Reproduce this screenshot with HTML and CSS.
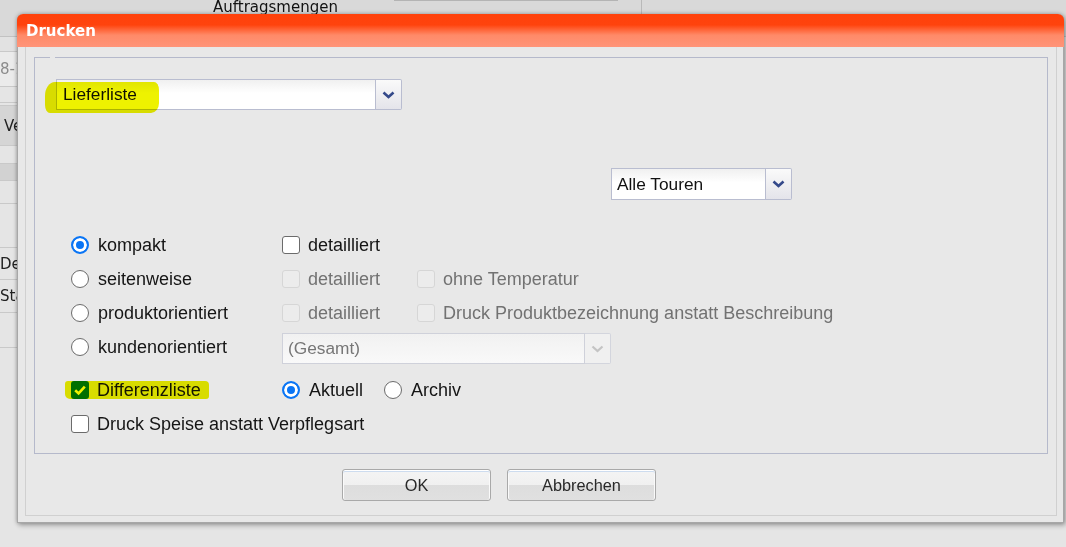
FILE: index.html
```html
<!DOCTYPE html>
<html lang="de">
<head>
  <meta charset="UTF-8" />
  <title>Drucken</title>
  <link rel="stylesheet" href="styles.css">
</head>
<body>
  <div class="topbar">
    <span class="caption">Auftragsmengen</span>
    <span class="topfield"></span>
    <span class="topsep"></span>
  </div>

  <div class="side">
    <div class="side-row r1"></div>
    <div class="side-row r2 dim">8-14</div>
    <div class="side-row r3"></div>
    <div class="side-row r4"></div>
    <div class="side-row r5 btnlike">Ver</div>
    <div class="side-row r6"></div>
    <div class="side-row r7 band"></div>
    <div class="side-row r8"></div>
    <div class="side-row r9"></div>
    <div class="side-row r10">Der</div>
    <div class="side-row r11">Stat</div>
    <div class="side-row r12"></div>
  </div>

  <div class="dialog">
    <div class="dialog-title">Drucken</div>
    <div class="dialog-panel">
      <fieldset class="print-box">
        <legend></legend>

        <div class="list-row">
          <div class="select list-select">
            <span class="select-value">Lieferliste</span>
            <span class="select-btn">
              <svg width="13" height="8" viewBox="0 0 13 8"><path d="M1.5 1.5 L6.5 6 L11.5 1.5" fill="none" stroke="#34498a" stroke-width="2.6"/></svg>
            </span>
          </div>
          <span class="marker marker-list"></span>
        </div>

        <div class="tour-row">
          <div class="select tour-select">
            <span class="select-value">Alle Touren</span>
            <span class="select-btn">
              <svg width="13" height="8" viewBox="0 0 13 8"><path d="M1.5 1.5 L6.5 6 L11.5 1.5" fill="none" stroke="#34498a" stroke-width="2.6"/></svg>
            </span>
          </div>
        </div>

        <div class="options">
          <label class="opt"><span class="radio on"></span>kompakt</label>
          <label class="opt"><span class="box"></span>detailliert</label>
          <span></span>

          <label class="opt"><span class="radio"></span>seitenweise</label>
          <label class="opt off"><span class="box"></span>detailliert</label>
          <label class="opt off"><span class="box"></span>ohne Temperatur</label>

          <label class="opt"><span class="radio"></span>produktorientiert</label>
          <label class="opt off"><span class="box"></span>detailliert</label>
          <label class="opt off"><span class="box"></span>Druck Produktbezeichnung anstatt Beschreibung</label>

          <label class="opt"><span class="radio"></span>kundenorientiert</label>
          <div class="select group-select off">
            <span class="select-value">(Gesamt)</span>
            <span class="select-btn">
              <svg width="13" height="8" viewBox="0 0 13 8"><path d="M1.5 1.5 L6.5 6 L11.5 1.5" fill="none" stroke="#c4c4c4" stroke-width="2.2"/></svg>
            </span>
          </div>
        </div>

        <div class="options extra">
          <label class="opt">
            <span class="box checked">
              <svg width="18" height="18" viewBox="0 0 18 18"><path d="M4.2 9.2 L7.6 12.4 L13.8 5.6" fill="none" stroke="#fff" stroke-width="2.6"/></svg>
            </span>
            Differenzliste
            <span class="marker marker-diff"></span>
          </label>
          <div class="archive">
            <label class="opt"><span class="radio on"></span>Aktuell</label>
            <label class="opt"><span class="radio"></span>Archiv</label>
          </div>

          <label class="opt wide"><span class="box"></span>Druck Speise anstatt Verpflegsart</label>
        </div>
      </fieldset>

      <div class="dialog-buttons">
        <button class="dlg-btn">OK</button>
        <button class="dlg-btn">Abbrechen</button>
      </div>
    </div>
  </div>
</body>
</html>
```

FILE: styles.css
```css
body {
  margin: 0;
  width: 1066px;
  height: 547px;
  overflow: hidden;
  position: relative;
  background: #e5e5e5;
  font-family: "Liberation Sans", Arial, sans-serif;
  color: #151515;
}

/* page behind the dialog */
.topbar {
  height: 37px;
  background: #d9d9d9;
  border-bottom: 1px solid #c2c2c2;
  box-sizing: border-box;
  display: flex;
  align-items: flex-start;
  overflow: hidden;
}

.caption {
  flex: 0 0 181px;
  margin-left: 213px;
  font-family: "DejaVu Sans", sans-serif;
  font-size: 15px;
  line-height: 14px;
  color: #111;
}

.topfield {
  flex: 0 0 224px;
  height: 1px;
  box-sizing: border-box;
  border: 1px solid #b4b4b4;
  border-top: none;
}

.topsep {
  width: 1px;
  height: 14px;
  margin-left: 23px;
  background: #b9b9b9;
}

.side {
  width: 60px;
  font-family: "DejaVu Sans", sans-serif;
  font-size: 15px;
  color: #222;
}

.side-row {
  box-sizing: border-box;
  border-bottom: 1px solid #c9c9c9;
  display: flex;
  align-items: center;
  white-space: nowrap;
  overflow: hidden;
}

.side-row.dim { color: #8c8c8c; }
.side-row.btnlike { background: #d5d5d5; padding-left: 4px; }
.side-row.band { background: #d2d2d2; }

.r1 { height: 15px; background: #e2e2e2; }
.r2 { height: 35px; background: #ebebeb; }
.r3 { height: 16px; }
.r4 { height: 3px; }
.r5 { height: 40px; }
.r6 { height: 18px; }
.r7 { height: 17px; }
.r8 { height: 23px; }
.r9 { height: 44px; }
.r10 { height: 32px; }
.r11 { height: 33px; }
.r12 { height: 35px; }

/* dialog */
.dialog {
  position: absolute;
  left: 17px;
  top: 14px;
  width: 1047px;
  height: 509px;
  box-sizing: border-box;
  background: #e8e8e8;
  border: 1px solid #a7a7a7;
  border-top: none;
  border-radius: 6px 6px 0 0;
  box-shadow: 0 0 4px rgba(0, 0, 0, 0.35), 2px 3px 5px rgba(0, 0, 0, 0.2);
  display: flex;
  flex-direction: column;
}

.dialog-title {
  height: 33px;
  margin: 0 -1px;
  padding: 2px 0 0 9px;
  box-sizing: border-box;
  border-radius: 6px 6px 0 0;
  background: linear-gradient(to bottom, #ff410b 0, #ff430d 33%, #ff8a68 64%, #ff9479 100%);
  color: #fff;
  font-family: "DejaVu Sans", sans-serif;
  font-weight: bold;
  font-size: 15px;
  line-height: 31px;
}

.dialog-panel {
  flex: 1;
  margin: 0 6px 6px 7px;
  border: 1px solid #d0d0d0;
  border-top: none;
  display: flex;
  flex-direction: column;
}

.print-box {
  margin: 10px 8px 0 8px;
  padding: 0;
  height: 397px;
  box-sizing: border-box;
  border: 1px solid #b5b9cb;
  min-inline-size: 0;
}

.print-box legend {
  margin-left: 15px;
  padding: 0;
  width: 5px;
  height: 0;
}

.list-row {
  position: relative;
  padding: 21px 0 0 21px;
}

.tour-row {
  padding: 58px 0 0 576px;
}

/* combo boxes */
.select {
  display: flex;
  font-size: 17.3px;
}

.select-value {
  flex: 1;
  box-sizing: border-box;
  border: 1px solid #b9bdd0;
  background: linear-gradient(to bottom, #f0f0f0 0, #ffffff 45%);
  padding-left: 5px;
  display: flex;
  align-items: center;
  color: #111;
}

.select-btn {
  flex: 0 0 26px;
  box-sizing: border-box;
  border: 1px solid #b9bdd0;
  border-left: none;
  border-radius: 0 2px 2px 0;
  background: linear-gradient(to bottom, #fafafa, #e4e4ea);
  display: flex;
  align-items: center;
  justify-content: center;
}

.list-select { width: 346px; height: 31px; }
.list-select .select-value { padding-left: 6px; }
.tour-select { width: 181px; height: 32px; }
.group-select { width: 329px; height: 31px; grid-column: 2 / 4; align-self: end; }

.select.off .select-value {
  border-color: #cfd1da;
  background: linear-gradient(to bottom, #f1f1f1, #f9f9f9);
  color: #767676;
}

.select.off .select-btn {
  border-color: #d3d5dd;
  background: #f0f0f0;
}

/* options grid */
.options {
  margin-top: 28px;
  padding-left: 36px;
  display: grid;
  grid-template-columns: 211px 135px 1fr;
  grid-auto-rows: 34px;
}

.options.extra {
  margin-top: 9px;
}

.opt {
  position: relative;
  display: flex;
  align-items: center;
  gap: 8px;
  font-size: 18px;
  color: #151515;
  white-space: nowrap;
}

.opt.off { color: #727272; }
.opt.wide { grid-column: 1 / 4; }

.archive {
  grid-column: 2 / 4;
  display: flex;
  gap: 21px;
}

.radio {
  width: 18px;
  height: 18px;
  margin-right: 1px;
  box-sizing: border-box;
  border: 1.4px solid #6b6b6b;
  border-radius: 50%;
  background: #fff;
}

.radio.on {
  border: 2px solid #0a75f5;
  background: #0a75f5;
  box-shadow: inset 0 0 0 3px #fff;
}

.box {
  width: 18px;
  height: 18px;
  box-sizing: border-box;
  border: 1.4px solid #6b6b6b;
  border-radius: 3px;
  background: #fff;
}

.opt.off .box {
  border: 1px solid #d6d6d6;
  background: #ececec;
}

.box.checked {
  border: none;
  background: #0075ff;
  display: flex;
}

/* highlighter marks */
.marker {
  position: absolute;
  background: #eef200;
  mix-blend-mode: multiply;
  pointer-events: none;
}

.marker-list {
  left: 10px;
  top: 24px;
  width: 114px;
  height: 31px;
  border-radius: 10px 5px 8px 5px / 14px 8px 10px 8px;
}

.marker-diff {
  left: -6px;
  top: 8px;
  width: 144px;
  height: 18px;
  border-radius: 3px 4px 3px 5px;
}

/* bottom buttons */
.dialog-buttons {
  display: flex;
  gap: 16px;
  padding: 15px 0 0 316px;
}

.dlg-btn {
  width: 149px;
  height: 32px;
  padding: 0;
  border: 1px solid #a9a9a9;
  border-radius: 3px;
  background: linear-gradient(to bottom, #f4f4f4 0, #f0f0f0 50%, #dddddd 50%, #e0e0e0 100%);
  box-shadow: inset 0 1px 0 #ffffff, inset 0 2px 0 #cddcef, inset 1px 0 0 #fafafa, inset -1px 0 0 #fafafa;
  font-family: "Liberation Sans", Arial, sans-serif;
  font-size: 16.3px;
  color: #2a2a2a;
}
```
